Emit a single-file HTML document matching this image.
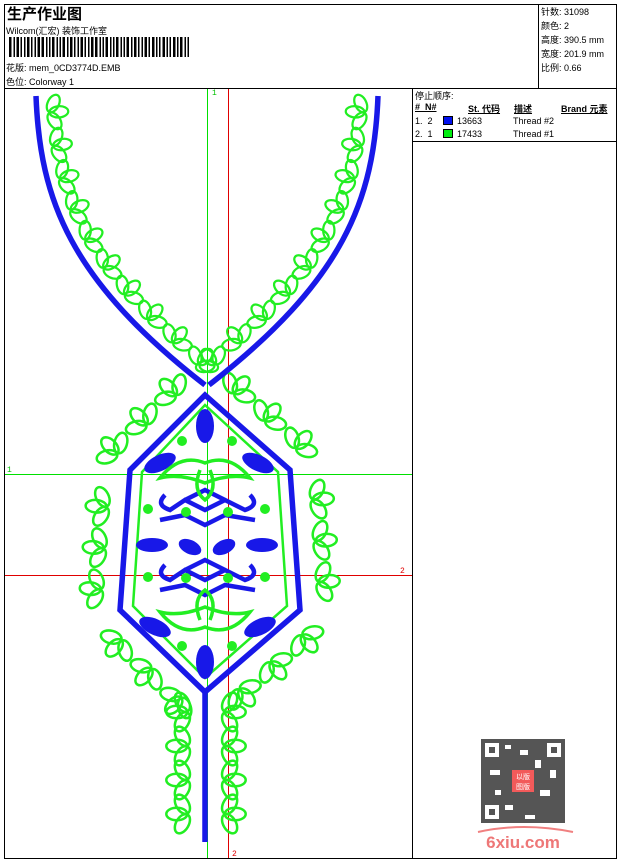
<!DOCTYPE html>
<html><head><meta charset="utf-8"><style>
body{margin:0;background:#fff;width:620px;height:860px;overflow:hidden;font-family:"Liberation Sans","Noto Sans CJK SC",sans-serif;}
.t{position:absolute;font-size:9px;color:#000;white-space:nowrap;}
</style></head><body>
<svg width="620" height="860" style="position:absolute;left:0;top:0" xmlns="http://www.w3.org/2000/svg" id="s">
<rect x="4.5" y="4.5" width="612" height="854" fill="none" stroke="#000"/>
<line x1="4" y1="88.5" x2="617" y2="88.5" stroke="#000"/>
<line x1="538.5" y1="4" x2="538.5" y2="88" stroke="#000"/>
<line x1="412.5" y1="88" x2="412.5" y2="859" stroke="#000"/>
<line x1="412" y1="141.5" x2="617" y2="141.5" stroke="#000"/>
<g id="bc" fill="#000"></g>
<line x1="207.5" y1="89" x2="207.5" y2="858" stroke="#00e000"/>
<line x1="228.5" y1="89" x2="228.5" y2="858" stroke="#e00000"/>
<line x1="5" y1="474.5" x2="412" y2="474.5" stroke="#00e000"/>
<line x1="5" y1="575.5" x2="412" y2="575.5" stroke="#e00000"/>
<text x="212" y="95" font-size="8" fill="#00c000" font-family="Liberation Mono">1</text>
<text x="7" y="472" font-size="8" fill="#00c000" font-family="Liberation Mono">1</text>
<text x="400" y="573" font-size="8" fill="#e00000" font-family="Liberation Mono">2</text>
<text x="232" y="856" font-size="8" fill="#e00000" font-family="Liberation Mono">2</text>
<g id="gr" fill="none" stroke="#22ee22" stroke-width="1.8"></g>
<g fill="none" stroke="#1818e8" stroke-width="5.5">
<path id="pl" d="M36,96 C40,200 70,280 205,385"/>
<path id="pr" d="M378,96 C374,200 344,280 209,385"/>
<path d="M205,395 L290,470 L300,610 L205,692 L120,610 L130,470 Z" id="hx"/>
<path d="M205,692 L205,842"/>
</g>
<path d="M205,405 L278,472 L287,606 L205,678 L133,606 L142,472 Z" fill="none" stroke="#22ee22" stroke-width="2.5"/>
<g fill="#1818e8">
<ellipse cx="205" cy="426" rx="9" ry="17"/>
<ellipse cx="205" cy="662" rx="9" ry="17"/>
<ellipse cx="160" cy="463" rx="17" ry="8" transform="rotate(-25 160 463)"/>
<ellipse cx="258" cy="463" rx="17" ry="8" transform="rotate(25 258 463)"/>
<ellipse cx="155" cy="627" rx="17" ry="8" transform="rotate(25 155 627)"/>
<ellipse cx="260" cy="627" rx="17" ry="8" transform="rotate(-25 260 627)"/>
<ellipse cx="152" cy="545" rx="16" ry="7"/>
<ellipse cx="190" cy="547" rx="12" ry="7" transform="rotate(25 190 547)"/>
<ellipse cx="224" cy="547" rx="12" ry="7" transform="rotate(-25 224 547)"/>
<ellipse cx="262" cy="545" rx="16" ry="7"/>
</g>
<g fill="none" stroke="#1818e8" stroke-width="4.5">
<path d="M165,495 q-10,10 5,15 L185,500 L205,510 L225,500 L245,510 q15,-5 5,-15 M160,520 L185,515 L205,525 L225,515 L255,520 M185,500 L205,490 L225,500"/>
<path d="M165,565 q-10,10 5,15 L185,570 L205,580 L225,570 L245,580 q15,-5 5,-15 M160,590 L185,585 L205,595 L225,585 L255,590 M185,570 L205,560 L225,570"/>
</g>
<g fill="#22ee22">
<circle cx="182" cy="441" r="5"/><circle cx="232" cy="441" r="5"/>
<circle cx="148" cy="509" r="5"/><circle cx="186" cy="512" r="5"/><circle cx="228" cy="512" r="5"/><circle cx="265" cy="509" r="5"/>
<circle cx="148" cy="577" r="5"/><circle cx="186" cy="578" r="5"/><circle cx="228" cy="578" r="5"/><circle cx="265" cy="577" r="5"/>
<circle cx="182" cy="646" r="5"/><circle cx="232" cy="646" r="5"/>
</g>
<g fill="none" stroke="#22ee22" stroke-width="3.5">
<path d="M160,478 q20,-25 45,-15 q25,-10 45,15 q-20,-5 -45,5 q-25,-10 -45,-5 Z"/>
<path d="M200,470 q-8,20 5,30 q13,-10 5,-30"/>
<path d="M160,612 q20,25 45,15 q25,10 45,-15 q-20,5 -45,-5 q-25,10 -45,5 Z"/>
<path d="M200,620 q-8,-20 5,-30 q13,10 5,30"/>
</g>
<g fill="#555">
<rect x="481" y="739" width="84" height="84"/>
</g>
<g fill="#fff">
<rect x="485" y="743" width="14" height="14"/><rect x="547" y="743" width="14" height="14"/><rect x="485" y="805" width="14" height="14"/>
<rect x="505" y="745" width="6" height="4"/><rect x="520" y="750" width="8" height="5"/><rect x="535" y="760" width="6" height="8"/><rect x="490" y="770" width="10" height="5"/><rect x="540" y="790" width="10" height="6"/><rect x="505" y="805" width="8" height="5"/><rect x="525" y="815" width="10" height="4"/><rect x="550" y="770" width="6" height="8"/><rect x="495" y="790" width="6" height="5"/>
</g>
<g fill="#555"><rect x="489" y="747" width="6" height="6"/><rect x="551" y="747" width="6" height="6"/><rect x="489" y="809" width="6" height="6"/></g>
<rect x="512" y="770" width="22" height="22" fill="#f25a5a"/>
<text x="523" y="779" font-size="7" fill="#fff" text-anchor="middle" font-family="Noto Sans CJK SC">以版</text>
<text x="523" y="789" font-size="7" fill="#fff" text-anchor="middle" font-family="Noto Sans CJK SC">图版</text>
<path d="M478,832 q45,-10 95,0" stroke="#f08080" stroke-width="2" fill="none"/>
<text x="523" y="848" font-size="17" font-weight="bold" fill="#ee7777" text-anchor="middle" font-family="Liberation Sans">6xiu.com</text>
</svg>
<div class="t" style="left:7px;top:3px;font-size:15px;font-weight:bold;">生产作业图</div>
<div class="t" style="left:6px;top:24px;">Wilcom(汇宏) 装饰工作室</div>
<div class="t" style="left:6px;top:61px;">花版: mem_0CD3774D.EMB</div>
<div class="t" style="left:6px;top:75px;">色位: Colorway 1</div>
<div class="t" style="left:541px;top:5px;line-height:14px;">针数: 31098<br>颜色: 2<br>高度: 390.5 mm<br>宽度: 201.9 mm<br>比例: 0.66</div>
<div class="t" style="left:415px;top:89px;">停止顺序:</div>
<div class="t" style="left:415px;top:102px;font-weight:bold;text-decoration:underline;">#&nbsp; N#</div>
<div class="t" style="left:468px;top:102px;font-weight:bold;text-decoration:underline;">St. 代码</div>
<div class="t" style="left:514px;top:102px;font-weight:bold;text-decoration:underline;">描述</div>
<div class="t" style="left:561px;top:102px;font-weight:bold;text-decoration:underline;">Brand 元素</div>
<div class="t" style="left:415px;top:116px;">1.&nbsp; 2</div>
<div style="position:absolute;left:443px;top:116px;width:10px;height:9px;background:#0010ee;border:1px solid #000;box-sizing:border-box"></div>
<div class="t" style="left:457px;top:116px;">13663</div>
<div class="t" style="left:513px;top:116px;">Thread #2</div>
<div class="t" style="left:415px;top:129px;">2.&nbsp; 1</div>
<div style="position:absolute;left:443px;top:129px;width:10px;height:9px;background:#00ee10;border:1px solid #000;box-sizing:border-box"></div>
<div class="t" style="left:457px;top:129px;">17433</div>
<div class="t" style="left:513px;top:129px;">Thread #1</div>
<script>
var NS="http://www.w3.org/2000/svg";
var bc=document.getElementById('bc'),x=9,w=[2,1,2,1,1,2,1,1,2,2,1,1,2,1,1,2,1,2,1,1,2,1,1,2,2,1,1,2,1,1,2,1,1,2,1,2,1,1,2,1,2,1,1,2,1,1,2,1,2,1,1,2,1,1,2,2,1,1,2,1,2];
for(var i=0;i<w.length&&x<190;i++){var r=document.createElementNS(NS,'rect');r.setAttribute('x',x);r.setAttribute('y',37);r.setAttribute('width',w[i]+0.5);r.setAttribute('height',20);bc.appendChild(r);x+=w[i]+(i%3==0?2.5:2);}
var gr=document.getElementById('gr');
function flower(cx,cy,rot,sc){var g=document.createElementNS(NS,'g');g.setAttribute('transform','translate('+cx+','+cy+') rotate('+rot+') scale('+sc+')');
[-60,0,60].forEach(function(a){var e=document.createElementNS(NS,'ellipse');e.setAttribute('cx',0);e.setAttribute('cy',-8);e.setAttribute('rx',4.5);e.setAttribute('ry',7.5);e.setAttribute('transform','rotate('+a+')');g.appendChild(e);});gr.appendChild(g);}
function along(id,side,n,off,sc){var p=document.getElementById(id),L=p.getTotalLength();for(var i=0;i<n;i++){var l=L*(i+0.5)/n,a=p.getPointAtLength(l),b=p.getPointAtLength(Math.min(L,l+1));var dx=b.x-a.x,dy=b.y-a.y,d=Math.hypot(dx,dy)||1;var nx=-dy/d*side,ny=dx/d*side;var ang=Math.atan2(ny,nx)*180/Math.PI+90;flower(a.x+nx*off,a.y+ny*off,ang,sc);}}
along('pl',-1,10,12,1.25);along('pr',1,10,12,1.25);
along('hx',-1,18,20,1.4);
for(var y=712;y<840;y+=34){flower(188,y,-90,1.4);flower(224,y,90,1.4);}
</script>
</body></html>
